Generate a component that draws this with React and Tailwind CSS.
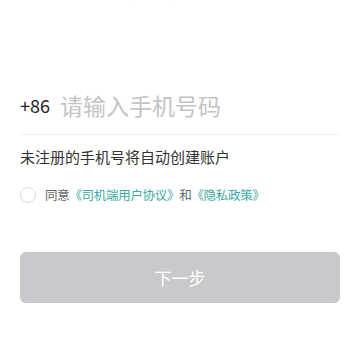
import React, { useState } from "react";

const FONT = { fontFamily: '"Noto Sans CJK SC", "Noto Sans", sans-serif' };

export default function App() {
  const [phone, setPhone] = useState("");
  const [agreed, setAgreed] = useState(false);

  return (
    <div className="w-[360px] h-[360px] bg-white overflow-hidden" style={FONT}>
      <div className="px-5">
        {/* subtitle, cut off at top */}
        <p className="-mt-[18px] text-[14px] leading-[20px] text-[#b5b5b5] whitespace-nowrap">
          为了您的账户安全，请使用本人手机号进行登录验证
        </p>

        {/* phone input */}
        <div className="mt-[81px] flex items-center h-[44px]">
          <span className="text-[18px] text-[#222] mr-[10px]">+86</span>
          <input
            type="tel"
            value={phone}
            onChange={(e) => setPhone(e.target.value)}
            placeholder="请输入手机号码"
            className="flex-1 min-w-0 text-[23px] text-[#333] placeholder:text-[#c4c4c4] outline-none bg-transparent"
            style={FONT}
          />
        </div>
        <div className="mt-[7px] h-px bg-[#eeeeee]" />

        <p className="mt-[11px] text-[15px] leading-[22px] text-[#333]">
          未注册的手机号将自动创建账户
        </p>

        {/* agreement */}
        <div className="mt-[17px] flex items-center h-[20px]">
          <button
            onClick={() => setAgreed(!agreed)}
            className={`w-[16px] h-[16px] rounded-full border ${
              agreed ? "border-[#3aa99f] bg-[#3aa99f]" : "border-[#dddddd]"
            }`}
          />
          <span className="ml-[9px] text-[12.5px] tracking-[-0.3px] text-[#666]">
            同意
            <span className="text-[#3aa99f]">《司机端用户协议》</span>
            和
            <span className="text-[#3aa99f]">《隐私政策》</span>
          </span>
        </div>

        <button className="mt-[47px] w-full h-[51px] rounded-[6px] bg-[#c8c9cc] text-white text-[17px]">
          下一步
        </button>
      </div>
    </div>
  );
}
